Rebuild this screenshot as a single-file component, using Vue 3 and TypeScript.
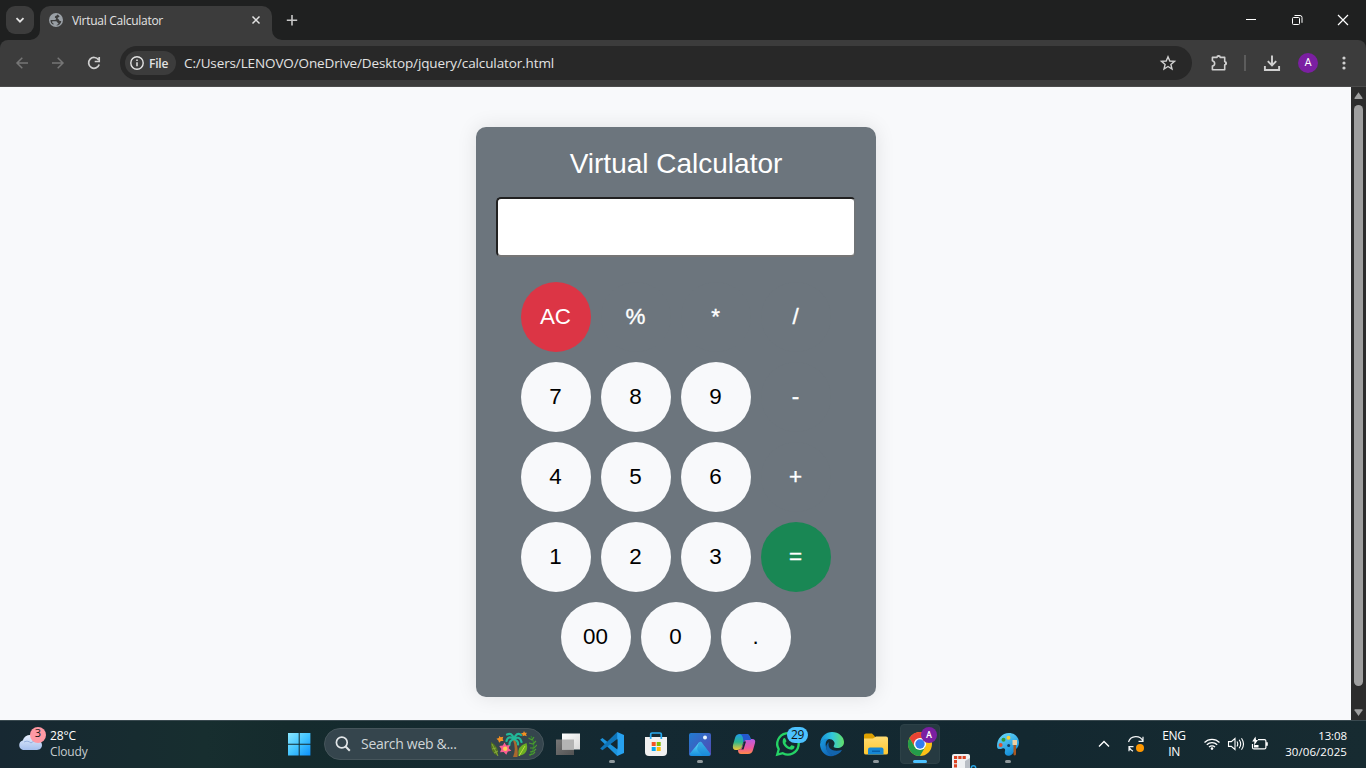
<script setup lang="ts">
import { ref } from 'vue'

interface Key {
  label: string
  kind: 'digit' | 'operator' | 'clear' | 'equals'
}

const display = ref<string>('')

const digit = (label: string): Key => ({ label, kind: 'digit' })
const operator = (label: string): Key => ({ label, kind: 'operator' })

const rows: Key[][] = [
  [{ label: 'AC', kind: 'clear' }, operator('%'), operator('*'), operator('/')],
  [digit('7'), digit('8'), digit('9'), operator('-')],
  [digit('4'), digit('5'), digit('6'), operator('+')],
  [digit('1'), digit('2'), digit('3'), { label: '=', kind: 'equals' }],
  [digit('00'), digit('0'), digit('.')],
]

function evaluate(source: string): string {
  const tokens = source.match(/\d+\.?\d*|\.\d+|[%*/+-]/g) ?? []
  if (!tokens.length) return ''
  const sums: number[] = [Number(tokens[0])]
  for (let i = 1; i + 1 < tokens.length; i += 2) {
    const value = Number(tokens[i + 1])
    const last = sums.length - 1
    if (tokens[i] === '+') sums.push(value)
    else if (tokens[i] === '-') sums.push(-value)
    else if (tokens[i] === '*') sums[last] *= value
    else if (tokens[i] === '/') sums[last] /= value
    else sums[last] %= value
  }
  const total = sums.reduce((a, b) => a + b, 0)
  return Number.isFinite(total) ? String(total) : 'Error'
}

function press(key: Key): void {
  if (key.kind === 'clear') display.value = ''
  else if (key.kind === 'equals') display.value = evaluate(display.value)
  else display.value += key.label
}
</script>

<template>
  <div class="screen">
    <header class="tabstrip">
      <button class="tab-search" aria-label="Search tabs">
        <svg width="28" height="28" viewBox="0 0 28 28"><path d="M10.5 12.2l3.5 3.5 3.5-3.5" fill="none" stroke="#e3e3e3" stroke-width="1.8" /></svg>
      </button>
      <div class="tab">
        <svg class="flare" width="10" height="10" viewBox="0 0 10 10"><path d="M10 0v10H0A10 10 0 0 0 10 0z" fill="#3c3c3c" /></svg>
        <svg width="16" height="16" viewBox="0 0 16 16">
          <circle cx="8" cy="8" r="7" fill="#9aa0a6" />
          <path d="M9.2 2.4c.2 1.2-2.4 1.3-2.4 2.6 0 1.2 1.4.9 1.4 1.9 0 .8-1.3 1-2.6 1H2.5c-.2 2.2 1 3.9 3 4.9V11.400c-1.400-.4-1.700-1.600-1.100-2.200h3.500c1.500 0 1 1.400 2.100 1.700.8.3.5 1.100-.6 1.600-.7.3-.9.6-.9 1.100 2.500-.3 4.600-2.300 4.800-4.700-.9.500-2 .1-2.200-.8-.2-1.100-1.500-.8-1.500-1.800 0-1.200 1.900-.7 1.900-2-.6-1-1.200-1.600-2.300-1.900z" fill="#3c3c3c" />
        </svg>
        <span class="tab-title">Virtual Calculator</span>
        <svg width="16" height="16" viewBox="0 0 16 16"><path d="M4.500 4.500l7 7m0-7l-7 7" stroke="#e3e3e3" stroke-width="1.500" /></svg>
        <svg class="flare right" width="10" height="10" viewBox="0 0 10 10"><path d="M0 0v10h10A10 10 0 0 1 0 0z" fill="#3c3c3c" /></svg>
      </div>
      <svg class="new-tab" width="20" height="20" viewBox="0 0 20 20"><path d="M10 5v10.4M4.8 10.2h10.4" stroke="#c7c7c7" stroke-width="1.6" /></svg>
      <div class="window-controls">
        <svg width="46" height="40" viewBox="0 0 46 40"><path d="M18 19.5h10" stroke="#fff" /></svg>
        <svg width="46" height="40" viewBox="0 0 46 40" fill="none" stroke="#fff"><rect x="18.5" y="17.5" width="7" height="7" rx="1" /><path d="M20.5 15.5H26a2 2 0 0 1 2 2v5.3" /></svg>
        <svg width="46" height="40" viewBox="0 0 46 40"><path d="M18 15l10 10m0-10L18 25" stroke="#fff" stroke-width="1.2" /></svg>
      </div>
    </header>

    <nav class="toolbar">
      <svg class="nav-icon" width="36" height="24" viewBox="0 0 36 24" fill="none" stroke="#767676" stroke-width="1.5"><path d="M28 12H17.2M22.3 6.7L17 12l5.3 5.3" /></svg>
      <svg class="nav-icon" width="36" height="24" viewBox="0 0 36 24" fill="none" stroke="#767676" stroke-width="1.5"><path d="M16 12h10.8M21.7 6.7L27 12l-5.3 5.3" /></svg>
      <svg class="nav-icon" width="36" height="24" viewBox="0 0 36 24" fill="none" stroke="#d0d0d0" stroke-width="1.7"><path d="M26.5 8.8A5.4 5.4 0 1 0 27.200 13.500M27.2 6v4.5H22.700" /></svg>
      <div class="omnibox">
        <div class="chip">
          <svg width="16" height="16" viewBox="0 0 16 16"><circle cx="8" cy="8" r="6.2" fill="none" stroke="#e3e3e3" stroke-width="1.4" /><path d="M8 7.2v4M8 4.5v1.5" stroke="#e3e3e3" stroke-width="1.5" /></svg>
          <span>File</span>
        </div>
        <span class="url">C:/Users/LENOVO/OneDrive/Desktop/jquery/calculator.html</span>
        <svg class="star" width="18" height="18" viewBox="0 0 18 18"><path d="M9 2.8l1.8 4.2 4.7.4-3.6 3 1.1 4.6-4-2.5L5 15l1.1-4.6-3.6-3 4.7-.4z" fill="none" stroke="#d0d0d0" stroke-width="1.4" /></svg>
      </div>
      <svg class="puzzle" width="20" height="20" viewBox="0 0 20 20"><path d="M3.4 4.400h4.600a1.600 1.600 0 0 1 3.200 0h4.500v4.300a1.600 1.600 0 0 1 0 3.200v4.900H3.400v-3.700c3-.6 3-4.700 0-5.300z" fill="none" stroke="#d0d0d0" stroke-width="1.6" stroke-linejoin="round" /><path d="M8 4a1.600 1.600 0 0 1 3.200 0zM16 8.700a1.600 1.600 0 0 1 0 3.200z" fill="#d0d0d0" /></svg>
      <span class="divider"></span>
      <svg class="download" width="20" height="20" viewBox="0 0 20 20" fill="none" stroke="#d0d0d0" stroke-width="1.9"><path d="M10 2.5v9.8M5.8 8.2l4.2 4.2 4.2-4.2M2.9 13v4h14.2v-4" /></svg>
      <span class="avatar">A</span>
      <svg class="more" width="20" height="20" viewBox="0 0 20 20" fill="#d0d0d0"><circle cx="10" cy="5" r="1.6" /><circle cx="10" cy="10" r="1.6" /><circle cx="10" cy="15" r="1.6" /></svg>
    </nav>

    <div class="viewport">
      <main class="page">
        <section class="calculator">
          <h1>Virtual Calculator</h1>
          <input v-model="display" class="display" type="text" aria-label="Result" />
          <div class="keys">
            <div v-for="(row, i) in rows" :key="i" class="row">
              <button v-for="key in row" :key="key.label" class="key" :class="key.kind" @click="press(key)">{{ key.label }}</button>
            </div>
          </div>
        </section>
      </main>
      <aside class="scrollbar">
        <svg width="15" height="18" viewBox="0 0 15 18"><path d="M7.5 5.3l4 5.8q.4.9-.6.9H4.1q-1 0-.6-.9z" fill="#9f9f9f" /></svg>
        <span class="thumb"></span>
        <svg width="15" height="18" viewBox="0 0 15 18"><path d="M7.5 14l4-5.800q.4-.9-.6-.9H4.100q-1 0-.6.9z" fill="#9f9f9f" /></svg>
      </aside>
    </div>

    <footer class="taskbar">
      <div class="weather">
        <svg width="32" height="32" viewBox="0 0 32 32">
          <defs><linearGradient id="cloud" x2="0" y2="1"><stop stop-color="#e6effc" /><stop offset="1" stop-color="#a5bfee" /></linearGradient></defs>
          <path d="M8 25a5 5 0 0 1-.3-9.6C9 11.7 12 10 15 10c4 0 6 2 7 5.3 3 .2 5 2 5 4.8 0 3-2 4.9-5 4.9z" fill="url(#cloud)" />
          <path d="M9 17c3-1.5 5-.7 7 1 1.8-1.6 4-2.4 6-2.1" fill="none" stroke="#96b0df" />
          <circle cx="23" cy="10" r="8" fill="#ff99a4" />
        </svg>
        <span class="weather-count">3</span>
        <div class="weather-text"><span>28°C</span><span class="dim">Cloudy</span></div>
      </div>

      <div class="apps">
        <span class="app">
          <svg width="24" height="24" viewBox="0 0 24 24">
            <defs><linearGradient id="win" x2="1" y2="1"><stop stop-color="#8be7ff" /><stop offset=".5" stop-color="#43c5ff" /><stop offset="1" stop-color="#0c91fb" /></linearGradient></defs>
            <path d="M1 1h10.700v10.700H1zM12.700 1h10.700v10.700H12.700zM1 12.700h10.700v10.700H1zM12.700 12.700h10.700v10.700H12.700z" fill="url(#win)" />
          </svg>
        </span>
        <div class="search">
          <svg width="18" height="18" viewBox="0 0 18 18" fill="none" stroke="#e2e6e8" stroke-width="1.7"><circle cx="7.8" cy="7.5" r="5.4" /><path d="M11.6 11.5l4.2 4.3" stroke-width="2" /></svg>
          <span>Search web &amp;...</span>
          <svg class="palm" width="48" height="28" viewBox="0 0 48 28">
            <path d="M24 27q3.500-8 0-17l2-1q3.600 9 2.500 18z" fill="#a9682e" />
            <g fill="none" stroke="#22b798" stroke-width="2.200" stroke-linecap="round"><path d="M25 9q-6-4-7.500 2M25 9q-2-7-7-4.500M25 9q2.500-7.500 7-4M25 9q6-3.500 7.500 3M25 9q-5 2-4.500 6M25 9q4.500 2 4 5.500" /></g>
            <path d="M2 12q8 4 7 14Q1 23 2 12z" fill="#52731f" /><path d="M3 14l6 12M3 19l4-1M5 23l4-2" stroke="#8fb442" stroke-width=".8" />
            <path d="M29.500 26q-2-10 8-13 3 11-8 13z" fill="#6caf22" /><path d="M30 26l6-10" stroke="#bedb43" />
            <path d="M41 26q7-10 1-20" fill="none" stroke="#2f7f2e" stroke-width="1.300" /><path d="M39.500 8l3.500 2 2-3m-5 6l4 1 3-3m-6 7l4 0 3-3m-7 7l4-1 2-2m-7 6l4-1 2-2" stroke="#4c9a31" stroke-width="1.200" fill="none" />
            <path d="M15.500 12.500l1.800 3 3.600-.600-1.200 3.400 2.700 2.400-3.600.9-1.500 3.200-2.600-2.700-3.700.2 1.400-3.400-2.200-2.800 3.600-.5z" fill="#fb5e91" /><circle cx="16.200" cy="18.800" r="2.200" fill="#ffce55" />
            <path d="M10 6l1.800 1.300 2.500-.6-.7 2.300.9 2-2.600.1-1.700 1.700-1-2.500-1.800-1.600 2.500-.700zM35 1l.9 1.700 2 0-.9 1.800.9 1.800-2.500-.8-1.800.8 0-1.800-1.800-1 2.500-.7z" fill="#f59022" />
          </svg>
        </div>
        <span class="app first-app">
          <svg width="26" height="26" viewBox="0 0 26 26"><defs><linearGradient id="sheet" x2="1" y2="1"><stop stop-color="#fff" /><stop offset="1" stop-color="#d8d8d8" /></linearGradient><linearGradient id="sheetBack" x2="1" y2="1"><stop stop-color="#777" /><stop offset="1" stop-color="#525252" /></linearGradient></defs><path d="M1 8.500h18v15.500H1z" fill="url(#sheetBack)" /><path d="M7 2.500h18v16H7z" fill="url(#sheet)" /><path d="M7 8.500h12v10H7z" fill="#b4b4b4" /></svg>
        </span>
        <span class="app running">
          <svg width="26" height="26" viewBox="0 0 26 26"><path d="M1.200 8.800L3.400 7 21 20.500 18.200 25z" fill="#1c93dc" /><path d="M1.200 17.400l2.200 1.800L21 6 18.200 1z" fill="#0f75b9" /><path d="M18.200 1L25 4v18l-6.800 3z" fill="#27a1ef" /><path d="M18.500 8.300L12.300 13l6.200 4.800z" fill="#142932" /></svg>
        </span>
        <span class="app">
          <svg width="26" height="26" viewBox="0 0 26 26"><path d="M2 6h22v15q0 4-4 4H6q-4 0-4-4z" fill="#f1f1f1" /><path d="M7.700 8V3.200Q7.700 2 9 2h8q1.300 0 1.300 1.200V8" fill="none" stroke="#28aaf0" stroke-width="1.700" /><path d="M8.700 11h4v4h-4z" fill="#f35325" /><path d="M13.700 11h4v4h-4z" fill="#81bc06" /><path d="M8.700 16h4v4h-4z" fill="#05a6f0" /><path d="M13.700 16h4v4h-4z" fill="#ffba08" /></svg>
        </span>
        <span class="app running">
          <svg width="26" height="26" viewBox="0 0 26 26"><defs><linearGradient id="photo" x2="1" y2="1"><stop stop-color="#207bd0" /><stop offset="1" stop-color="#5548b2" /></linearGradient><linearGradient id="hill" x2="0" y2="1"><stop stop-color="#63e1fa" /><stop offset="1" stop-color="#168ddd" /></linearGradient></defs><rect x="2" y="2" width="22" height="23" rx="2" fill="url(#photo)" /><path d="M2.500 23L12 11.500q1.300-1.500 2.600 0L23.500 23q-.5 2-3 2H5q-2 0-2.500-2z" fill="url(#hill)" /><path d="M12 11.500q1.300-1.500 2.600 0L23.500 23q-.5 2-3 2H16l-5-5q-2-2 1-8.500z" fill="#1c86d6" opacity=".55" /><circle cx="18" cy="6.500" r="2" fill="#e9f6ff" /></svg>
        </span>
        <span class="app">
          <svg width="26" height="26" viewBox="0 0 26 26"><defs><linearGradient id="coA" x2="0" y2="1"><stop stop-color="#219be9" /><stop offset=".5" stop-color="#2ab58d" /><stop offset="1" stop-color="#f5c735" /></linearGradient><linearGradient id="coB" x2="0" y2="1"><stop stop-color="#b55de5" /><stop offset=".6" stop-color="#ee579e" /><stop offset="1" stop-color="#ff8a47" /></linearGradient></defs><path d="M9 3h7q2 0 3 3l1 3h-5q-2 0-3 3l-1 4q-1 3-5 3H5q-4 0-3-5l2-7q1-4 5-4z" fill="url(#coA)" /><path d="M17 23h-7q-3 0-3-4 3 0 4-3l2-5q1-3 4-3h4q4 0 3 4l-2 7q-1 4-5 4z" fill="url(#coB)" /><path d="M12 3h4q2 0 3 3l1 3h-5q-2 0-3 3 1-7-3-9z" fill="#2458cf" /><path d="M11.500 16l1.500-5.500h2l-2.500 8h-2.500q1-.5 1.500-2.500z" fill="#142932" /></svg>
        </span>
        <span class="app">
          <svg width="28" height="28" viewBox="0 0 28 28"><path d="M3.2 24.7l1.5-5.5a10.7 10.7 0 1 1 4.1 4z" fill="none" stroke="#25d366" stroke-width="2.3" /><path d="M9 9.2c1-2 2-1.4 2.5-.2l.9 2c.2.8-.7 1.3-1.1 1.9 1.1 2 2.5 3.3 4.5 4.1l1.3-1.5c.6-.6 3.6.9 3.5 1.3-.3 2.4-2.5 3.2-4.5 2.7-4.5-1-8-5-7.4-8.700z" fill="#25d366" /></svg>
          <b class="badge">29</b>
        </span>
        <span class="app">
          <svg width="26" height="26" viewBox="0 0 26 26"><defs><linearGradient id="edgeA" x2="1"><stop stop-color="#168fd9" /><stop offset=".5" stop-color="#31c6de" /><stop offset="1" stop-color="#62df68" /></linearGradient><linearGradient id="edgeB" x2="1" y2="1"><stop stop-color="#1b9de2" /><stop offset="1" stop-color="#0d53a6" /></linearGradient></defs><path d="M1.2 12C2 5 7 1 13 1c7 0 12 5 12 10 0 4-3 6-7 6-3 0-4-1-3-2.5 2-3-1-6.5-5-6.5-4 0-7 1.200-8.800 4z" fill="url(#edgeA)" /><path d="M1 13c1-4 5-6 9-5-3 1-4 4-3 8 1 5 5 9 10 8-9 4-16-3-16-11z" fill="url(#edgeB)" /><path d="M10 11c-2 5 2 11 13 8-2 4-7 6-10 5-6-1-8-10-3-13z" fill="#1264ad" /></svg>
        </span>
        <span class="app running">
          <svg width="26" height="26" viewBox="0 0 26 26"><defs><linearGradient id="folder" x2="0" y2="1"><stop stop-color="#ffdc72" /><stop offset="1" stop-color="#ffc72f" /></linearGradient></defs><path d="M1 4q0-1.500 2-1.500h6l3 3v5H1z" fill="#dda000" /><path d="M1 7.500h9l3-2h10q2 0 2 2V22q0 1.500-2 1.500H3q-2 0-2-1.500z" fill="url(#folder)" /><path d="M5 23.500v-5q0-2 2-2h11.500q2 0 2 2v5z" fill="#1587d4" /><path d="M9 19.500h8V21H9z" fill="#0760aa" /></svg>
        </span>
        <span class="app active">
          <svg width="26" height="26" viewBox="0 0 26 26"><circle cx="13" cy="13" r="12" fill="#fbc116" /><path d="M2.6 7A12 12 0 0 1 23.4 7H13L7.8 16z" fill="#ea4335" /><path d="M2.6 7A12 12 0 0 0 13 25l5.2-9-10.4 0z" fill="#249c4a" /><circle cx="13" cy="13" r="6.1" fill="#fff" /><circle cx="13" cy="13" r="4.7" fill="#327cf0" /></svg>
          <b class="profile">A</b>
        </span>
        <span class="app snip">
          <svg width="26" height="14" viewBox="0 0 26 14"><path d="M1 2q0-2 2-2h14q2 0 2 2v12H1z" fill="#eef0f2" /><path d="M14 7l5-3v10h-5z" fill="#b9bec5" /><path d="M3 3.500h12M4.500 6v8" stroke="#dc4323" stroke-width="3" stroke-dasharray="3.200 1.100" /><circle cx="22.5" cy="14" r="2.2" fill="none" stroke="#28a4e2" stroke-width="1.5" /></svg>
        </span>
        <span class="app running">
          <svg width="26" height="26" viewBox="0 0 26 26"><defs><linearGradient id="paint" x2=".5" y2="1"><stop stop-color="#6cdcfb" /><stop offset="1" stop-color="#1690da" /></linearGradient></defs><path d="M14 2c6 0 10 4.500 10 9.500 0 3-1 5-3 6.500-2 1.500-2.500 5.500-6 6.500-4 1-6-1.500-5-4.500.6-2-.8-3.200-2.600-2.500C4.500 18.500 2 18.500 2 15 2 8 7 2 14 2z" fill="url(#paint)" /><circle cx="8.500" cy="8.700" r="2" fill="#379a33" /><circle cx="13.500" cy="6.700" r="2" fill="#f6cf36" /><circle cx="5.600" cy="14" r="2" fill="#dc5131" /><circle cx="13.700" cy="14.500" r="1.500" fill="#123e64" /><path d="M17.500 9H22v5h-4.500z" fill="#ecd0a4" /><path d="M18.500 14H21v9.500q-1.250 2-2.500 0z" fill="#a75722" /></svg>
        </span>
      </div>

      <div class="tray">
        <svg class="chevron" width="16" height="16" viewBox="0 0 16 16"><path d="M3 10.5l5-5 5 5" fill="none" stroke="#fff" stroke-width="1.4" /></svg>
        <svg class="sync" width="20" height="20" viewBox="0 0 20 20" fill="none" stroke="#f2f4f5" stroke-width="1.2"><path d="M2.5 8A7.8 7.8 0 0 1 17 7.2M17 2.8v4.5h-4.5M7 17.2a7.5 7.5 0 0 1-3.8-4M3 17.2v-4.5h4.5" /><circle cx="14" cy="14" r="4" fill="#ff9800" stroke="none" /></svg>
        <div class="language"><span>ENG</span><span>IN</span></div>
        <svg class="wifi" width="18" height="16" viewBox="0 0 18 16" fill="none" stroke="#fff" stroke-width="1.3"><path d="M1.5 6.5a10.5 10.5 0 0 1 15 0M3.8 8.8a7.3 7.3 0 0 1 10.4 0M6 11.1a4.2 4.2 0 0 1 6 0" /><circle cx="9" cy="12.6" r="1.3" fill="#fff" stroke="none" /></svg>
        <svg class="volume" width="18" height="16" viewBox="0 0 18 16" fill="none" stroke="#fff" stroke-width="1.1"><path d="M1.5 5.6h2.8L8 2.5v11l-3.7-3.1H1.5zM10 5.5q1.5 2.5 0 5M12.2 3.8q3 4.2 0 8.4M14.5 2.2q4 5.8 0 11.6" /></svg>
        <svg class="battery" width="18" height="16" viewBox="0 0 18 16"><path d="M7 3.600h6.400q1.500 0 1.500 1.500v6.300q0 1.500-1.500 1.500H3q-1.500 0-1.500-1.500V8" fill="none" stroke="#fff" stroke-width="1.200" /><path d="M15 6.2h1.8v3.5H15z" fill="#fff" /><path d="M3 9h4.500v2.500H3zM4.500.500L1.200 5.500h2.200L3 9.500 7 4H5z" fill="#fff" /></svg>
        <div class="clock"><span>13:08</span><span>30/06/2025</span></div>
      </div>
    </footer>
  </div>
</template>

<style>
body {
  overflow: hidden;
}
</style>

<style scoped>
.screen,
.screen * {
  box-sizing: border-box;
}
.screen {
  width: 1366px;
  height: 768px;
  display: flex;
  flex-direction: column;
  font-family: 'Open Sans', 'Noto Sans', sans-serif;
  background: #1f2020;
  overflow: hidden;
}
svg {
  display: block;
  flex: none;
}
button {
  border: 0;
  padding: 0;
}
.tabstrip {
  height: 40px;
  flex: none;
  display: flex;
  align-items: center;
  padding-left: 6px;
  background: #1f2020;
}
.tab-search {
  width: 28px;
  height: 28px;
  border-radius: 9px;
  background: #3c3c3c;
}
.tab {
  position: relative;
  width: 232px;
  height: 34px;
  margin: 6px 0 0 6px;
  padding: 0 8px 6px;
  display: flex;
  align-items: center;
  border-radius: 10px 10px 0 0;
  background: #3c3c3c;
}
.flare {
  position: absolute;
  bottom: 0;
  left: -10px;
}
.flare.right {
  left: auto;
  right: -10px;
}
.tab-title {
  flex: 1;
  margin-left: 8px;
  font-size: 12px;
  letter-spacing: -0.28px;
  color: #e3e3e3;
  white-space: nowrap;
}
.new-tab {
  margin-left: 10px;
}
.window-controls {
  display: flex;
  margin-left: auto;
}
.toolbar {
  height: 47px;
  flex: none;
  display: flex;
  align-items: center;
  background: #3c3c3c;
  border-bottom: 1px solid #4b4b4b;
  border-radius: 8px 8px 0 0;
}
.omnibox {
  width: 1072px;
  height: 34px;
  margin-left: 12px;
  padding: 0 15px 0 5px;
  display: flex;
  align-items: center;
  border-radius: 17px;
  background: #282828;
}
.chip {
  width: 51px;
  height: 24px;
  padding-left: 4px;
  display: flex;
  align-items: center;
  gap: 4px;
  border-radius: 12px;
  background: #3c3c3c;
  color: #e3e3e3;
  font-size: 12px;
  font-weight: 600;
  letter-spacing: -0.2px;
}
.url {
  flex: 1;
  margin-left: 8px;
  color: #e3e3e3;
  font-size: 13.5px;
  letter-spacing: -0.12px;
}
.puzzle {
  margin-left: 17px;
}
.divider {
  width: 2px;
  height: 16px;
  margin: 0 16px 0 15px;
  background: #5c5c5c;
}
.avatar {
  width: 20px;
  height: 20px;
  margin-left: 16px;
  border-radius: 50%;
  background: #7b1fa2;
  color: #fff;
  font: 11px/20px Roboto, sans-serif;
  text-align: center;
}
.more {
  margin-left: 16px;
}
.viewport {
  flex: 1;
  min-height: 0;
  display: flex;
}
.page {
  flex: 1;
  display: flex;
  justify-content: center;
  align-items: flex-start;
  padding: 40px 0 0 1px;
  background: #f8f9fb;
  font-family: 'Liberation Sans', Arial, sans-serif;
}
.calculator {
  width: 400px;
  height: 570px;
  padding: 20px;
  border-radius: 10px;
  background: #6c757d;
  box-shadow: 0 0 20px rgba(0, 0, 0, 0.1);
}
h1 {
  margin: 0 0 17px;
  color: #fff;
  font-size: 28px;
  font-weight: 400;
  line-height: 33px;
  text-align: center;
}
.display {
  display: block;
  width: 360px;
  height: 60px;
  padding: 0 10px;
  border: 2px solid;
  border-color: #212121 #6f7478 #767676 #212121;
  border-radius: 5px;
  outline: 0;
  background: #fff;
  font-size: 24px;
  text-align: right;
}
.keys {
  display: grid;
  gap: 10px;
  margin-top: 25px;
}
.row {
  display: flex;
  justify-content: center;
  gap: 10px;
}
.key {
  width: 70px;
  height: 70px;
  padding: 0 1px 1px 0;
  border-radius: 50%;
  background: #f8f9fb;
  color: #000;
  font: 22.4px 'Liberation Sans', Arial, sans-serif;
}
.key.operator {
  background: #6c757d;
  color: #fff;
  -webkit-text-stroke: 0.35px #fff;
}
.key.clear {
  background: #dc3545;
  color: #fff;
}
.key.equals {
  background: #198754;
  color: #fff;
  -webkit-text-stroke: 0.35px #fff;
}
.scrollbar {
  width: 15px;
  display: flex;
  flex-direction: column;
  align-items: center;
  background: #2c2c2c;
}
.thumb {
  flex: 1;
  width: 9px;
  margin-bottom: 16px;
  border-radius: 5px;
  background: #9f9f9f;
}
.taskbar {
  height: 48px;
  flex: none;
  display: flex;
  align-items: center;
  padding-bottom: 1px;
  border-top: 1px solid #3a4a50;
  background: linear-gradient(90deg, #172832, #172e2f 15%, #152b2d 21%, #142932 45%, #132830 75%, #172b31);
  color: #fff;
  font-size: 12px;
  line-height: 16px;
}
.weather {
  position: relative;
  width: 277px;
  padding-left: 15px;
  display: flex;
  align-items: center;
}
.weather > svg {
  margin-top: -6px;
}
.weather-count {
  position: absolute;
  left: 30px;
  top: -3px;
  width: 16px;
  color: #161616;
  font-size: 11px;
  text-align: center;
}
.weather-text {
  display: flex;
  flex-direction: column;
  margin-left: 3px;
  font-size: 12px;
  letter-spacing: -0.15px;
}
.dim {
  color: #c7cdd0;
}
.apps {
  display: flex;
  align-items: center;
  height: 46px;
}
.app {
  position: relative;
  width: 44px;
  height: 46px;
  display: flex;
  align-items: center;
  justify-content: center;
}
.first-app {
  margin-left: 2px;
}
.search {
  width: 220px;
  height: 32px;
  margin-left: 3px;
  padding: 0 6px 0 9px;
  display: flex;
  align-items: center;
  border: 1px solid #46555b;
  border-radius: 16px;
  background: #35454d;
  color: #d0d5d8;
  font-size: 14px;
  letter-spacing: -0.3px;
}
.search span {
  flex: 1;
  margin-left: 9px;
  white-space: nowrap;
}
.running::after,
.active::after {
  content: '';
  position: absolute;
  bottom: 4px;
  left: 19px;
  width: 6px;
  height: 3px;
  border-radius: 2px;
  background: #8e989c;
}
.active::after {
  left: 15px;
  width: 14px;
  background: #4cc2ff;
}
.active::before {
  content: '';
  position: absolute;
  inset: 3px 2px 3px;
  border: 1px solid #2d4147;
  border-radius: 4px;
  background: #263a41;
}
.active svg {
  position: relative;
}
.badge {
  position: absolute;
  top: 6px;
  left: 21px;
  width: 21px;
  border-radius: 8px;
  background: #4cc2ff;
  color: #111;
  font-size: 12px;
  font-weight: 400;
  letter-spacing: -0.3px;
  text-align: center;
}
.profile {
  position: absolute;
  top: 6px;
  left: 23px;
  width: 16px;
  border-radius: 50%;
  background: #7b1fa2;
  font: 500 9px/16px Roboto, sans-serif;
  text-align: center;
}
.snip {
  align-items: flex-end;
}
.snip svg {
  margin-bottom: -1px;
}
.tray {
  display: flex;
  align-items: center;
  margin-left: auto;
  padding-right: 19px;
}
.sync {
  margin-left: 14px;
}
.language {
  width: 40px;
  margin-left: 8px;
  display: flex;
  flex-direction: column;
  text-align: center;
  font-size: 12px;
  letter-spacing: -0.35px;
}
.wifi {
  margin-left: 9px;
}
.volume {
  margin-left: 6px;
}
.battery {
  margin-left: 6px;
}
.clock {
  width: 78px;
  display: flex;
  flex-direction: column;
  margin-top: -1px;
  text-align: right;
  font-size: 11.5px;
  letter-spacing: 0.08px;
}
.clock span:first-child {
  letter-spacing: -0.1px;
}
</style>
